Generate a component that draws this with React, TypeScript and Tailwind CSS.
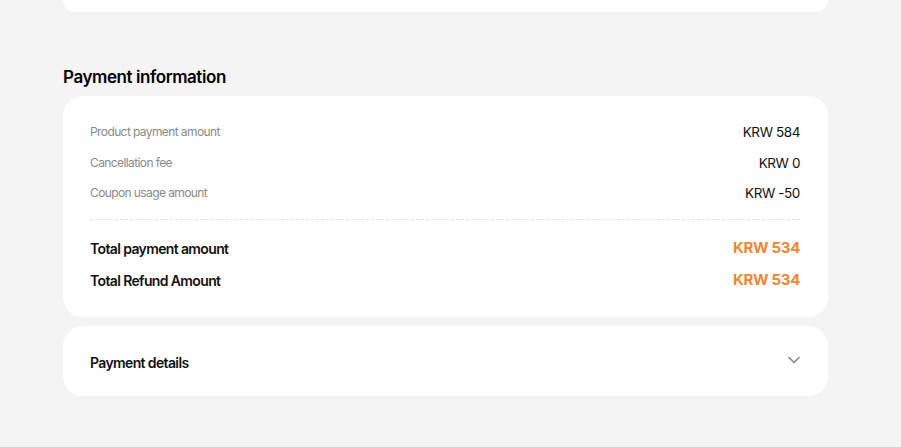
import { ChevronDown } from "lucide-react";

const rows = [
  { label: "Product payment amount", value: "KRW 584" },
  { label: "Cancellation fee", value: "KRW 0" },
  { label: "Coupon usage amount", value: "KRW -50" },
];

const totals = [
  { label: "Total payment amount", value: "KRW 534" },
  { label: "Total Refund Amount", value: "KRW 534" },
];

export default function App() {
  return (
    <div
      className="min-h-[447px] bg-[#f4f4f4] px-[63px] text-black"
      style={{ fontFamily: "Inter, 'Noto Sans', sans-serif" }}
    >
      <div className="w-[765px]">
        {/* previous card (cut off) */}
        <div className="h-[12px] rounded-b-[20px] bg-white" />

        <h2 className="mt-[53px] mb-[7px] text-[17px] leading-[24px] font-semibold tracking-[-0.025em]">
          Payment information
        </h2>

        {/* Summary card */}
        <div className="rounded-[20px] bg-white px-[27px] pt-[21px] pb-[20px] pr-[28px]">
          {rows.map((row) => (
            <div
              key={row.label}
              className="flex h-[30.5px] items-center justify-between"
            >
              <span className="text-[12px] tracking-[-0.05em] text-[#8a8a8a]">
                {row.label}
              </span>
              <span className="text-[13.5px] tracking-[-0.03em] text-[#111]">
                {row.value}
              </span>
            </div>
          ))}

          <div className="mt-[10px] border-t border-dashed border-[#e2e2e2]" />

          <div className="mt-[13px]">
            {totals.map((row) => (
              <div
                key={row.label}
                className="flex h-[32px] items-center justify-between"
              >
                <span className="text-[14px] font-semibold tracking-[-0.045em] text-[#111]">
                  {row.label}
                </span>
                <span className="text-[15px] font-bold tracking-[-0.02em] text-[#f5862e]">
                  {row.value}
                </span>
              </div>
            ))}
          </div>
        </div>

        {/* Payment details */}
        <div className="mt-[9px] flex h-[70px] items-center justify-between rounded-[20px] bg-white pt-[3px] pl-[27px] pr-[24px]">
          <span className="text-[14px] font-semibold tracking-[-0.045em] text-[#111]">
            Payment details
          </span>
          <ChevronDown size={20} strokeWidth={2} className="-mt-[4px] text-[#8a8a8a]" />
        </div>
      </div>
    </div>
  );
}
